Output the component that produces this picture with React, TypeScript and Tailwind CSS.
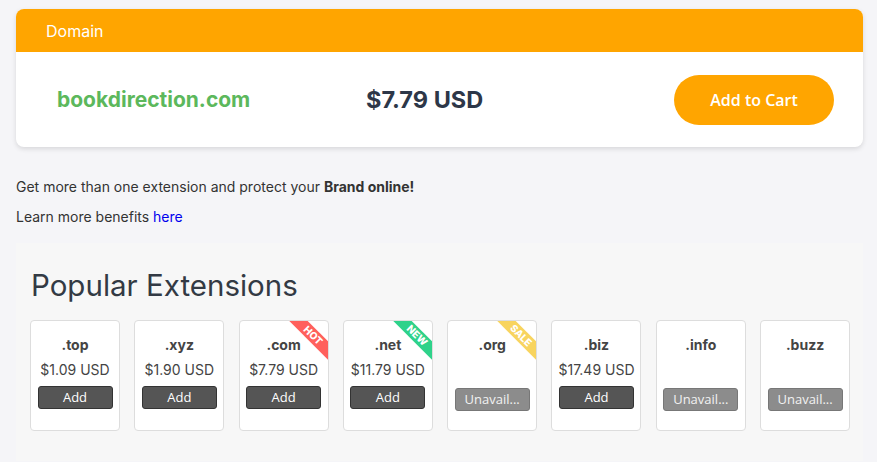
import React from 'react';

type Ext = {
  tld: string;
  price?: string;
  tag?: { label: string; color: string };
};

const extensions: Ext[] = [
  { tld: '.top', price: '$1.09 USD' },
  { tld: '.xyz', price: '$1.90 USD' },
  { tld: '.com', price: '$7.79 USD', tag: { label: 'HOT', color: 'bg-[#ff605c]' } },
  { tld: '.net', price: '$11.79 USD', tag: { label: 'NEW', color: 'bg-[#2ed28a]' } },
  { tld: '.org', tag: { label: 'SALE', color: 'bg-[#f8d45e]' } },
  { tld: '.biz', price: '$17.49 USD' },
  { tld: '.info' },
  { tld: '.buzz' },
];

const ExtensionCard: React.FC<{ ext: Ext }> = ({ ext }) => (
  <div className="relative w-[90px] h-[111px] bg-white border border-[#dddddd] rounded-[4px] overflow-hidden flex flex-col items-center pt-[15px]">
    {/* corner ribbon */}
    {ext.tag && (
      <div
        className={`absolute top-[8px] right-[-15px] w-[60px] h-[13px] rotate-45 ${ext.tag.color} text-white text-[10px] font-extrabold leading-[13px] text-center`}
      >
        {ext.tag.label}
      </div>
    )}
    <div className="text-[14px] leading-[18px] font-bold text-[#444]">{ext.tld}</div>
    <div className="mt-[7px] h-[18px] text-[14px] leading-[18px] text-[#444]">{ext.price}</div>
    {ext.price ? (
      <button className="mt-[7px] w-[75px] h-[23px] bg-[#555555] border border-[#333] rounded-[3px] text-white text-[13px] leading-[21px] font-['Open_Sans',sans-serif]">
        Add
      </button>
    ) : (
      <button className="mt-[9px] w-[75px] h-[23px] bg-[#8c8c8c] border border-[#777] rounded-[3px] text-[#f2f2f2] text-[13px] leading-[21px] font-['Open_Sans',sans-serif]">
        Unavail...
      </button>
    )}
  </div>
);

export default function App() {
  return (
    <div className="min-h-[462px] bg-[#f5f5f8] pl-4 pr-[14px] pt-[9px] font-['Inter','Noto_Sans',sans-serif] text-[#333]">
      {/* Domain result card */}
      <div className="bg-white rounded-[8px] overflow-hidden shadow-[0_2px_5px_rgba(0,0,0,0.12)]">
        <div className="h-[43px] bg-[#ffa500] pl-[30px] flex items-center text-white text-[16px]">
          Domain
        </div>
        <div className="h-[95px] flex items-center pl-[41px] pr-[29px]">
          <div className="w-[309px] text-[21px] font-bold text-[#5cb85c]">bookdirection.com</div>
          <div className="flex-1 text-[23.5px] font-bold text-[#2d3748]">$7.79 USD</div>
          <button className="w-[160px] h-[50px] rounded-full bg-[#ffa500] text-white text-[16px] font-semibold font-['Open_Sans',sans-serif]">
            Add to Cart
          </button>
        </div>
      </div>

      <p className="mt-[30px] text-[14px] leading-[20px]">
        Get more than one extension and protect your <b>Brand online!</b>
      </p>
      <p className="mt-[10px] text-[14px] leading-[20px]">
        Learn more benefits <a className="text-[#0000ee]">here</a>
      </p>

      {/* Popular extensions */}
      <div className="mt-[16px] bg-[#f7f7f7] pl-[14px] pt-[24px] pb-[30px]">
        <h2 className="pl-[1px] text-[29.5px] leading-[36px] font-normal text-[#333a44]">Popular Extensions</h2>
        <div className="mt-[17px] flex gap-[14.3px]">
          {extensions.map((ext) => (
            <ExtensionCard key={ext.tld} ext={ext} />
          ))}
        </div>
      </div>
    </div>
  );
}
